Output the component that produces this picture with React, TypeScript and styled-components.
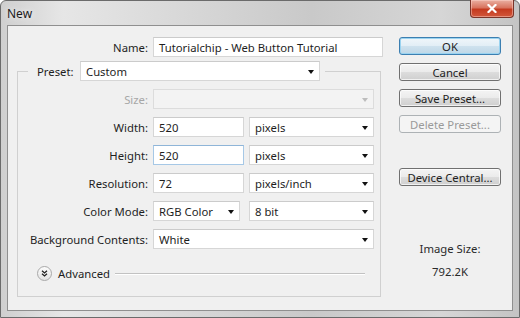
import React from "react";
import styled, { createGlobalStyle, css } from "styled-components";

const Global = createGlobalStyle`
	html, body {
		margin: 0;
		padding: 0;
		background: #ffffff;
	}
	#root {
		width: 520px;
		height: 318px;
	}
`;

const Window = styled.div`
	box-sizing: border-box;
	width: 520px;
	height: 318px;
	display: flex;
	flex-direction: column;
	padding: 0 6px 6px 6px;
	border: 1px solid #6b6b6b;
	border-radius: 6px 6px 0 0;
	background: linear-gradient(
		90deg,
		#cfcfcf 0%,
		#e6e6e6 12%,
		#d8d8d8 35%,
		#c9c9c9 60%,
		#d6d6d6 85%,
		#c4c4c4 100%
	);
	font-family: "Noto Sans", "Open Sans", sans-serif;
	font-size: 11.3px;
	color: #1e1e1e;
`;

const TitleBar = styled.div`
	height: 24px;
	display: flex;
	align-items: flex-start;
	justify-content: space-between;
`;

const Title = styled.span`
	margin-top: 4px;
	font-size: 12px;
	color: #1b1b1b;
	text-shadow: 0 0 6px rgba(255, 255, 255, 0.9);
`;

const CloseButton = styled.div`
	box-sizing: border-box;
	width: 44px;
	height: 18px;
	margin-top: -1px;
	margin-right: -1px;
	display: flex;
	align-items: center;
	justify-content: center;
	border: 1px solid #7a3429;
	border-top: none;
	border-radius: 0 0 4px 4px;
	background: linear-gradient(180deg, #eab0a2 0%, #d8745f 45%, #c43a1f 55%, #d2573b 100%);
	box-shadow: inset 0 0 0 1px rgba(255, 220, 210, 0.45);
`;

const Client = styled.div`
	flex: 1;
	display: flex;
	border: 1px solid #8f8f8f;
	background: #f0f0f0;
`;

const MainColumn = styled.div`
	width: 382px;
	display: flex;
	flex-direction: column;
`;

const SideColumn = styled.div`
	width: 102px;
	margin-left: 9px;
	padding-top: 11px;
	display: flex;
	flex-direction: column;
	gap: 8px;
`;

const Row = styled.div<{ $label: number }>`
	height: 20px;
	display: flex;
	align-items: center;
	gap: 5px;
	& > :first-child {
		width: ${(p) => p.$label}px;
		flex: none;
	}
`;

const Label = styled.span<{ $disabled?: boolean }>`
	text-align: right;
	white-space: nowrap;
	color: ${(p) => (p.$disabled ? "#a7a7a7" : "#1e1e1e")};
`;

const boxBase = css`
	box-sizing: border-box;
	height: 20px;
	flex: none;
	display: flex;
	align-items: center;
	padding-left: 5px;
	background: #ffffff;
	border: 1px solid #d6d6d6;
	border-top-color: #cbcbcb;
	white-space: nowrap;
`;

const TextField = styled.div<{ $w: number; $focus?: boolean }>`
	${boxBase};
	width: ${(p) => p.$w}px;
	${(p) =>
		p.$focus &&
		css`
			border-color: #a6c8e6;
			border-top-color: #8fb5d8;
		`}
`;

const Select = styled.div<{ $w: number; $disabled?: boolean; $shift?: number }>`
	${boxBase};
	width: ${(p) => p.$w}px;
	margin-left: ${(p) => p.$shift ?? 0}px;
	position: relative;
	${(p) =>
		p.$disabled &&
		css`
			background: #f3f3f3;
			border-color: #dcdcdc;
		`}
	&::after {
		content: "";
		position: absolute;
		right: 5px;
		top: 8px;
		border-left: 3.5px solid transparent;
		border-right: 3.5px solid transparent;
		border-top: 4px solid ${(p) => (p.$disabled ? "#bdbdbd" : "#111111")};
	}
`;

const NameRow = styled(Row)`
	margin-top: 11px;
`;

const Group = styled.fieldset`
	box-sizing: border-box;
	width: 364px;
	margin: 4px 0 0 9px;
	padding: 8px 0 15px 0;
	border: 1px solid #d0d0d0;
	display: flex;
	flex-direction: column;
	gap: 8px;
`;

const Legend = styled.legend`
	margin-left: 10px;
	padding: 0 5px 0 9px;
	height: 20px;
	display: flex;
	align-items: center;
	gap: 3px;
	& > :first-child {
		width: 40px;
		text-align: left;
	}
`;

const AdvancedRow = styled.div`
	margin-top: 8px;
	height: 16px;
	display: flex;
	align-items: center;
	padding: 0 15px 0 19px;
	gap: 6px;
`;

const RoundToggle = styled.div`
	box-sizing: border-box;
	width: 15px;
	height: 15px;
	border-radius: 50%;
	border: 1px solid #a9a9a9;
	background: linear-gradient(180deg, #fbfbfb 0%, #e4e4e4 100%);
	display: flex;
	align-items: center;
	justify-content: center;
`;

const Rule = styled.div`
	flex: 1;
	height: 1px;
	margin-left: -1px;
	background: #c2c2c2;
	box-shadow: 0 1px 0 #ffffff;
`;

const Button = styled.div<{ $default?: boolean; $disabled?: boolean }>`
	box-sizing: border-box;
	height: 18px;
	display: flex;
	align-items: center;
	justify-content: center;
	border: 1px solid #707070;
	border-radius: 3px;
	background: linear-gradient(180deg, #f4f4f4 0%, #ebebeb 49%, #dddddd 50%, #cfcfcf 100%);
	box-shadow: inset 0 0 0 1px rgba(255, 255, 255, 0.7);
	color: #1e1e1e;
	white-space: nowrap;
	${(p) =>
		p.$default &&
		css`
			border-color: #3c7fb1;
			box-shadow: inset 0 0 0 1px #9ad3f0;
			background: linear-gradient(180deg, #f0f6fa 0%, #e2eef6 49%, #cfe2ee 50%, #bed7e7 100%);
		`}
	${(p) =>
		p.$disabled &&
		css`
			border-color: #adb2b5;
			background: #f4f4f4;
			box-shadow: none;
			color: #9a9a9a;
		`}
`;

const Spacer = styled.div<{ $h: number }>`
	height: ${(p) => p.$h}px;
`;

const SizeInfo = styled.div`
	margin-top: 47px;
	display: flex;
	flex-direction: column;
	align-items: center;
	gap: 8px;
	line-height: 15px;
	color: #2a2a2a;
`;

const App: React.FC = () => {
	return (
		<>
			<Global />
			<Window>
				<TitleBar>
					<Title>New</Title>
					<CloseButton>
						<svg width="10" height="9" viewBox="0 0 10 9">
							<path
								d="M1.5 1 L8.5 8 M8.5 1 L1.5 8"
								stroke="#ffffff"
								strokeWidth="2.2"
								strokeLinecap="square"
							/>
						</svg>
					</CloseButton>
				</TitleBar>
				<Client>
					<MainColumn>
						<NameRow $label={140}>
							<Label>Name:</Label>
							<TextField $w={230}>Tutorialchip - Web Button Tutorial</TextField>
						</NameRow>
						<Group>
							<Legend>
								<Label>Preset:</Label>
								<Select $w={240}>Custom</Select>
							</Legend>
							<Row $label={130}>
								<Label $disabled>Size:</Label>
								<Select $w={221} $disabled />
							</Row>
							<Row $label={130}>
								<Label>Width:</Label>
								<TextField $w={91}>520</TextField>
								<Select $w={125}>pixels</Select>
							</Row>
							<Row $label={130}>
								<Label>Height:</Label>
								<TextField $w={91} $focus>520</TextField>
								<Select $w={125}>pixels</Select>
							</Row>
							<Row $label={130}>
								<Label>Resolution:</Label>
								<TextField $w={91}>72</TextField>
								<Select $w={125}>pixels/inch</Select>
							</Row>
							<Row $label={130}>
								<Label>Color Mode:</Label>
								<Select $w={87}>RGB Color</Select>
								<Select $w={125} $shift={4}>8 bit</Select>
							</Row>
							<Row $label={130}>
								<Label>Background Contents:</Label>
								<Select $w={221}>White</Select>
							</Row>
							<AdvancedRow>
								<RoundToggle>
									<svg width="7" height="7" viewBox="0 0 7 7">
										<path
											d="M1 0.8 L3.5 3 L6 0.8 M1 3.8 L3.5 6 L6 3.8"
											fill="none"
											stroke="#222222"
											strokeWidth="1.3"
										/>
									</svg>
								</RoundToggle>
								<span>Advanced</span>
								<Rule />
							</AdvancedRow>
						</Group>
					</MainColumn>
					<SideColumn>
						<Button $default>OK</Button>
						<Button>Cancel</Button>
						<Button>Save Preset...</Button>
						<Button $disabled>Delete Preset...</Button>
						<Spacer $h={19} />
						<Button>Device Central...</Button>
						<SizeInfo>
							<span>Image Size:</span>
							<span>792.2K</span>
						</SizeInfo>
					</SideColumn>
				</Client>
			</Window>
		</>
	);
};

export default App;
